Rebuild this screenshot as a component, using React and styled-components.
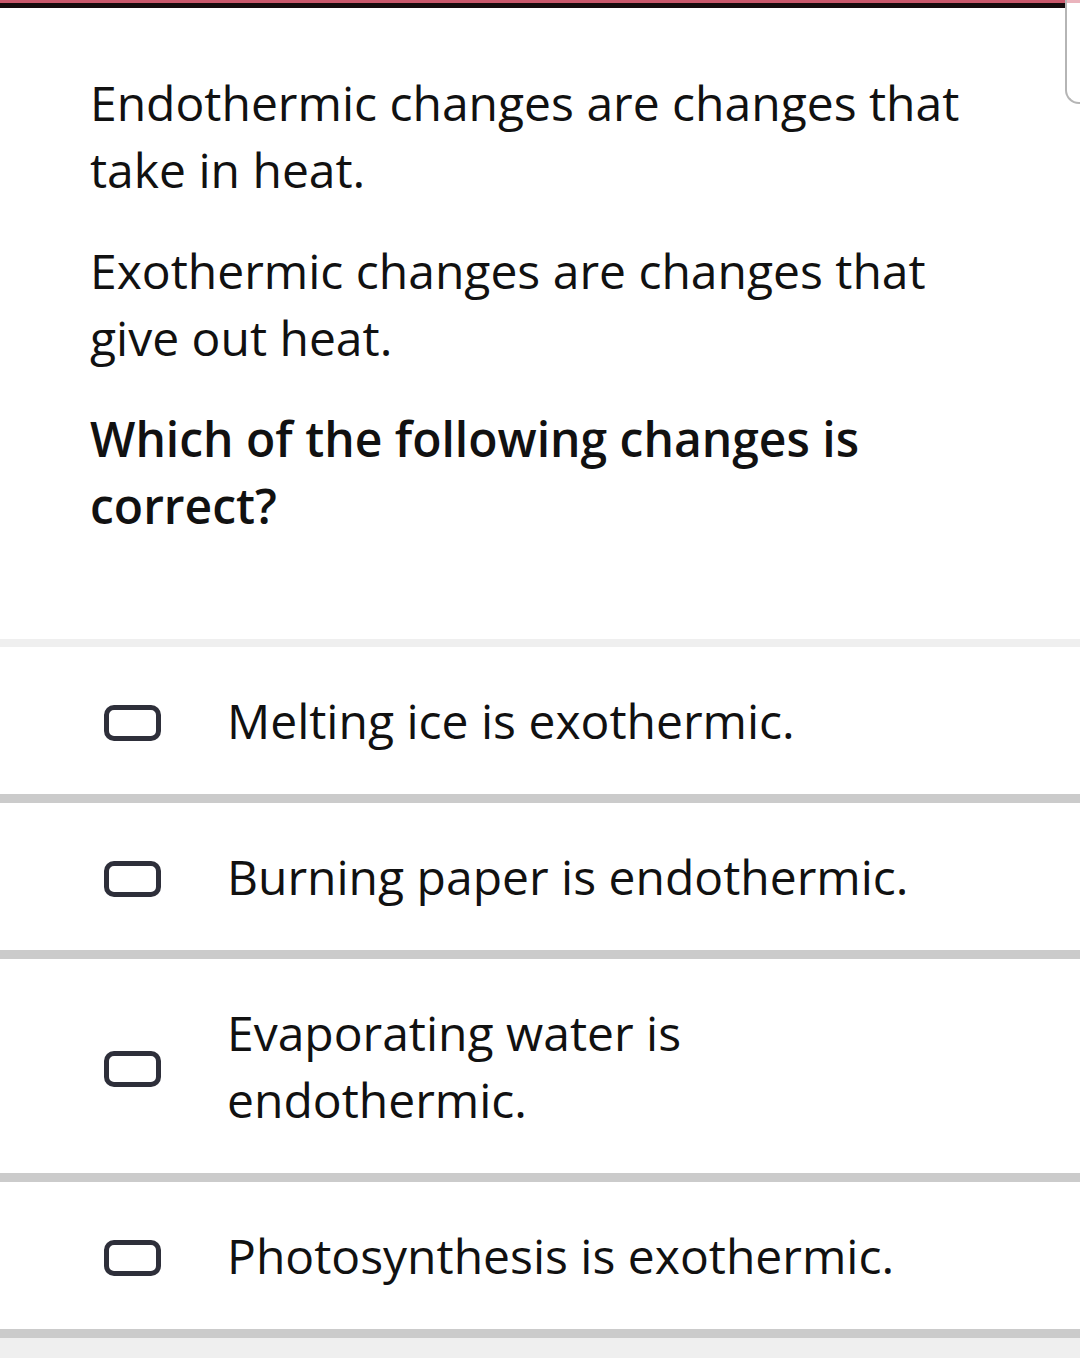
import React from "react";
import styled, { createGlobalStyle } from "styled-components";

const Global = createGlobalStyle`
  html, body { margin: 0; padding: 0; background: #ffffff; }
  body { font-family: "Open Sans", "Noto Sans", sans-serif; color: #111111; }
`;

const Page = styled.div`
  position: relative;
  width: 1080px;
  height: 1358px;
  overflow: hidden;
  background: #efefef;
  display: flex;
  flex-direction: column;
`;

const TopBar = styled.div`
  height: 3px;
  background: #c9576b;
  border-bottom: 5px solid #150a0c;
`;

const Popup = styled.div`
  position: absolute;
  top: 0;
  left: 1065px;
  width: 40px;
  height: 102px;
  border-left: 2px solid #b5b5b5;
  border-bottom: 2px solid #b5b5b5;
  border-bottom-left-radius: 14px;
  background: #ffffff;
  &::before {
    content: "";
    position: absolute;
    top: 0;
    left: 0;
    right: 0;
    height: 3px;
    background: #eab4bd;
  }
`;

const Question = styled.div`
  background: #ffffff;
  padding: 61px 90px 100px 90px;
  display: flex;
  flex-direction: column;
  gap: 34px;
`;

const Para = styled.p`
  margin: 0;
  font-size: 48px;
  line-height: 67px;
  font-weight: ${(p) => (p.$bold ? 600 : 400)};
`;

const Options = styled.div`
  border-top: 8px solid #efefef;
  display: flex;
  flex-direction: column;
`;

const Row = styled.div`
  background: #ffffff;
  display: flex;
  align-items: center;
  gap: 66px;
  padding: 40px 133px 40px 104px;
  border-bottom: 9px solid #cbcbcb;
`;

const Box = styled.span`
  flex: none;
  width: 57px;
  height: 36px;
  margin-top: 5px;
  box-sizing: border-box;
  border: 5px solid #2e2f3a;
  border-radius: 10px;
`;

const Label = styled.span`
  font-size: 48px;
  line-height: 67px;
`;

const options = [
  "Melting ice is exothermic.",
  "Burning paper is endothermic.",
  "Evaporating water is endothermic.",
  "Photosynthesis is exothermic.",
];

export default function App() {
  return (
    <Page>
      <Global />
      <TopBar />
      <Popup />
      <Question>
        <Para>Endothermic changes are changes that take in heat.</Para>
        <Para>Exothermic changes are changes that give out heat.</Para>
        <Para $bold>Which of the following changes is correct?</Para>
      </Question>
      <Options>
        {options.map((o) => (
          <Row key={o}>
            <Box />
            <Label>{o}</Label>
          </Row>
        ))}
      </Options>
    </Page>
  );
}
